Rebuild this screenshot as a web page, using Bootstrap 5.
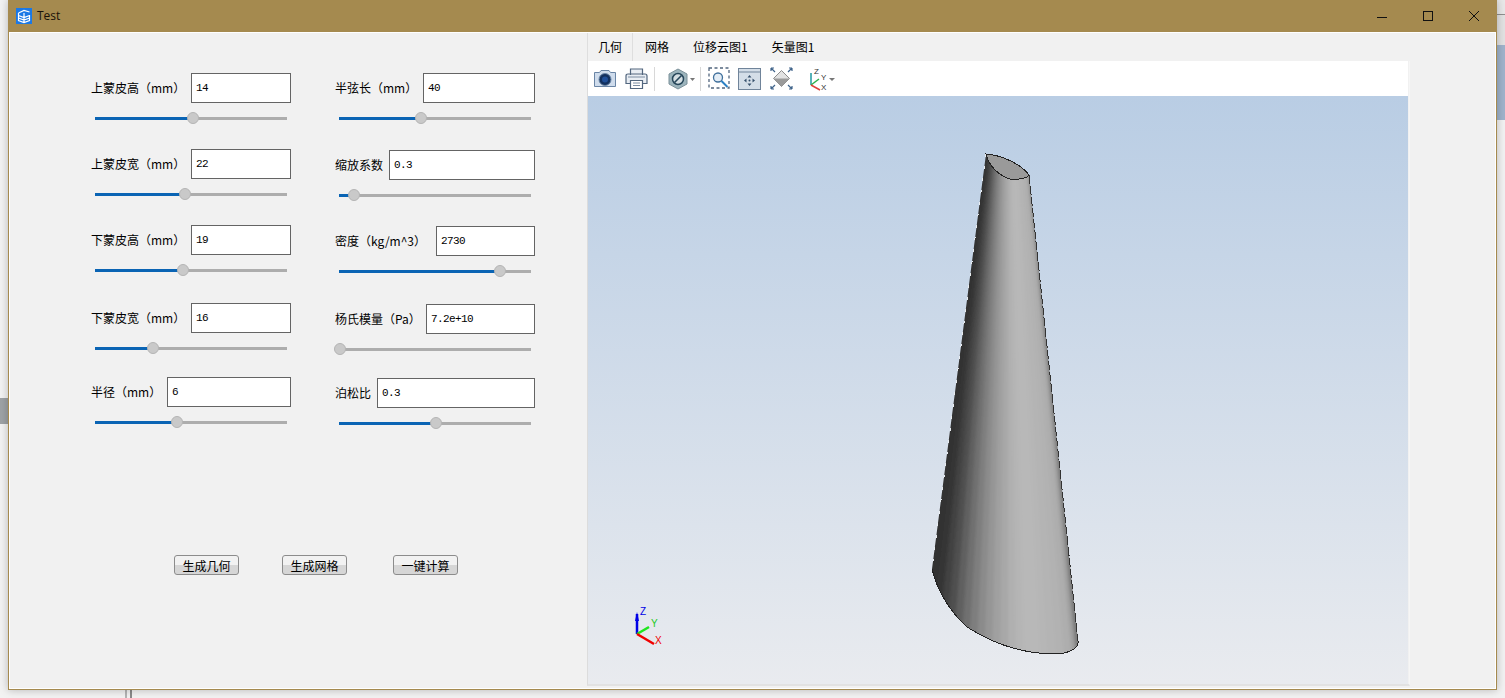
<!DOCTYPE html>
<html lang="zh">
<head>
<meta charset="utf-8">
<title>Test</title>
<link href="https://cdn.jsdelivr.net/npm/bootstrap@5.3.0/dist/css/bootstrap.min.css" rel="stylesheet">
<style>
html,body{height:100%;margin:0;background:#f2f2f2;overflow:hidden}
body{font-family:"Noto Sans CJK SC","Noto Sans",sans-serif;font-size:12px;color:#000}
.desk{height:698px;padding:0 8px 8px 8px;position:relative}
.bgband{position:absolute;left:0;top:398px;width:8px;height:26px;background:#9ea2a5}
.bgline{position:absolute;left:125px;top:690px;width:7px;height:8px;border-left:2px solid #b4b4b4;border-right:2px solid #8a8a8a}
.bgstrip1{position:absolute;left:1497px;top:0;width:8px;height:45px;background:#e2e2e2;border-top:14px solid #e8e8e8}
.bgrule{position:absolute;left:1497px;top:14px;width:8px;height:1px;background:#8f8f8f}
.bgstrip2{position:absolute;left:1497px;top:45px;width:8px;height:75px;background:#9fb3cb}
.win{height:690px;width:1489px;box-shadow:0 0 8px rgba(0,0,0,.25);background:#a58a4f;padding:0 1px 1px 1px;position:relative}
.tbar{height:32px;padding-left:7px;color:#1a1208;font-family:"Open Sans",sans-serif;font-size:12px}
.tico{width:16px;height:16px;margin-right:5px}
.wbtns{margin-right:-1px}
.wbtn{width:46px;height:30px}
.client{height:657px;background:#f1f1f1;border:1px solid #fff}
.pane{width:577px;padding:40px 0 0 81px}
.col1{width:200px;margin-right:44px}
.fld{height:56px}
.m20{margin-bottom:20px}.m21{margin-bottom:21px}.m22{margin-bottom:22px}.m18{margin-bottom:18px}
.lab{white-space:nowrap;line-height:30px}
.inp{height:30px;border:1px solid #646464;background:#fff;padding:0 0 0 4px;font-family:"Liberation Mono",monospace;font-size:11px;letter-spacing:-.6px;color:#000;border-radius:0;outline:0;min-width:0}
.iw100{width:100px}.iw124{width:124px}.iw112{width:112px}.iw146{width:146px}.iw99{width:99px}.iw109{width:109px}.iw158{width:158px}
.sld{height:3px;width:192px;margin:14px 0 0 4px;background:#adadad;position:relative}
.sfill{height:3px;background:#0a64b4}
.knob{position:absolute;top:-5px;width:12px;height:12px;margin-left:-6px;border-radius:50%;background:#c9c9c9;border:1px solid #b4b4b4}
.btnrow{margin-top:121px;padding-left:83px}
.qbtn{width:65px;height:20px;padding:0;border:1px solid #8c8c8c;border-radius:3px;background:linear-gradient(#f2f2f2 0,#f2f2f2 50%,#d6d6d6 50%,#d6d6d6 100%);font-size:12px;line-height:17px;color:#000;font-family:"Noto Sans CJK SC",sans-serif}
.gap1{margin-right:43px}.gap2{margin-right:46px}
.rside{width:823px}
.tabsb{height:28px}
.tb{padding:0 12px;line-height:27px;height:28px;white-space:nowrap}
.tb1{padding:0;border-left:1px solid #dedede;border-right:1px solid #dedede;width:46px;line-height:27px}
.view{border-left:1px solid #dcdcdc;border-right:1px solid #f6f6f6;border-bottom:2px solid #e2e2e2;width:823px;padding-right:1px}
.tools{height:35px;background:#fff;padding-left:5px}
.sep{width:1px;height:24px;background:#d8d8d8}
.canvas{height:588px;display:block;width:820px;background:linear-gradient(#b9cde4,#e9ebef)}
.axtx{font-family:"Liberation Sans",sans-serif;font-size:10px}
.axmini{font-family:"Liberation Sans",sans-serif;font-size:8px;fill:#333}
.i1{margin-right:8px}.i2{margin-right:6px}.i3{margin-right:13px}.i4{margin-right:4px}.i5{margin-right:7px}
.i6{margin-right:8px}.i7{margin-right:9px}.i8{margin-right:16px}
</style>
</head>
<body>
<div class="desk">
<div class="bgband"></div>
<div class="bgline"></div>
<div class="bgstrip1"></div>
<div class="bgrule"></div>
<div class="bgstrip2"></div>
<div class="win d-flex flex-column">
  <div class="tbar d-flex align-items-center">
    <svg class="tico" viewBox="0 0 16 16"><rect width="16" height="16" fill="#1a78e6"/><path d="M2.500 5 8 2.500 13.500 4M2.500 5v7.500L8 14.500l5.500-2V7M2.500 7.500 8 9.500l5.500-2M2.500 10 8 12l5.500-2M8 5v9" fill="none" stroke="#fff" stroke-width="1.200"/></svg>
    <span>Test</span>
    <div class="wbtns d-flex ms-auto">
      <div class="wbtn d-flex align-items-center justify-content-center"><svg width="12" height="12" viewBox="0 0 12 12"><path d="M1 7.500h10" stroke="#111" fill="none"/></svg></div>
      <div class="wbtn d-flex align-items-center justify-content-center"><svg width="12" height="12" viewBox="0 0 12 12"><rect x="1.500" y="1.500" width="9" height="9" stroke="#111" fill="none"/></svg></div>
      <div class="wbtn d-flex align-items-center justify-content-center"><svg width="12" height="12" viewBox="0 0 12 12"><path d="M1 1l10 10M11 1 1 11" stroke="#111" fill="none"/></svg></div>
    </div>
  </div>
  <div class="client d-flex">
    <div class="pane">
      <div class="d-flex">
        <div class="col1">
          <div class="fld m20"><div class="d-flex justify-content-between"><span class="lab">上蒙皮高（mm）</span><input class="inp iw100" value="14"></div><div class="sld"><div class="sfill" style="width:98px"></div><div class="knob" style="left:98px"></div></div></div>
          <div class="fld m20"><div class="d-flex justify-content-between"><span class="lab">上蒙皮宽（mm）</span><input class="inp iw100" value="22"></div><div class="sld"><div class="sfill" style="width:90px"></div><div class="knob" style="left:90px"></div></div></div>
          <div class="fld m22"><div class="d-flex justify-content-between"><span class="lab">下蒙皮高（mm）</span><input class="inp iw100" value="19"></div><div class="sld"><div class="sfill" style="width:88px"></div><div class="knob" style="left:88px"></div></div></div>
          <div class="fld m18"><div class="d-flex justify-content-between"><span class="lab">下蒙皮宽（mm）</span><input class="inp iw100" value="16"></div><div class="sld"><div class="sfill" style="width:58px"></div><div class="knob" style="left:58px"></div></div></div>
          <div class="fld"><div class="d-flex justify-content-between"><span class="lab">半径（mm）</span><input class="inp iw124" value="6"></div><div class="sld"><div class="sfill" style="width:82px"></div><div class="knob" style="left:82px"></div></div></div>
        </div>
        <div class="col1">
          <div class="fld m21"><div class="d-flex justify-content-between"><span class="lab">半弦长（mm）</span><input class="inp iw112" value="40"></div><div class="sld"><div class="sfill" style="width:82px"></div><div class="knob" style="left:82px"></div></div></div>
          <div class="fld m20"><div class="d-flex justify-content-between"><span class="lab">缩放系数</span><input class="inp iw146" value="0.3"></div><div class="sld"><div class="sfill" style="width:15px"></div><div class="knob" style="left:15px"></div></div></div>
          <div class="fld m22"><div class="d-flex justify-content-between"><span class="lab">密度（kg/m^3）</span><input class="inp iw99" value="2730"></div><div class="sld"><div class="sfill" style="width:161px"></div><div class="knob" style="left:161px"></div></div></div>
          <div class="fld m18"><div class="d-flex justify-content-between"><span class="lab">杨氏模量（Pa）</span><input class="inp iw109" value="7.2e+10"></div><div class="sld"><div class="sfill" style="width:1px"></div><div class="knob" style="left:1px"></div></div></div>
          <div class="fld"><div class="d-flex justify-content-between"><span class="lab">泊松比</span><input class="inp iw158" value="0.3"></div><div class="sld"><div class="sfill" style="width:97px"></div><div class="knob" style="left:97px"></div></div></div>
        </div>
      </div>
      <div class="btnrow d-flex">
        <button class="qbtn gap1" type="button">生成几何</button>
        <button class="qbtn gap2" type="button">生成网格</button>
        <button class="qbtn" type="button">一键计算</button>
      </div>
    </div>
    <div class="rside">
      <div class="tabsb d-flex">
        <div class="tb1 text-center">几何</div>
        <div class="tb">网格</div>
        <div class="tb">位移云图1</div>
        <div class="tb">矢量图1</div>
      </div>
      <div class="view">
        <div class="tools d-flex align-items-center">
          <svg class="i1" width="24" height="19" viewBox="0 0 24 19"><path d="M1.500 3.500h5l1.500-2h8l1.500 2h5v14h-21z" fill="#cfdcec" stroke="#6a85a5"/><circle cx="12" cy="10.500" r="6" fill="#12305e" stroke="#6a85a5"/><circle cx="12" cy="10.500" r="3" fill="#1f4f98"/></svg>
          <svg class="i2" width="23" height="21" viewBox="0 0 23 21"><path d="M5.500 7V1h12v6M5 15.500H1V8q0-2 2-2h17q2 0 2 2v7.500h-4" fill="#e8edf3" stroke="#52667e" stroke-width="1.200"/><path d="M5.500 12.500h12v8h-12z" fill="#fff" stroke="#52667e" stroke-width="1.200"/><path d="M8 15h7M8 17.500h7M3 9h17" stroke="#7c8da2"/></svg>
          <div class="sep i3"></div>
          <svg class="i4" width="28" height="22" viewBox="0 0 28 22"><path d="M10 1l9 5v10l-9 5-9-5V6z" fill="#9cb4bc" stroke="#7b9099"/><circle cx="10" cy="11" r="5.500" fill="#d5dfe3" stroke="#27475a" stroke-width="1.500"/><path d="M6.500 14.500l7-7" stroke="#27475a" stroke-width="1.600"/><path d="M22 10h5l-2.500 3z" fill="#777"/></svg>
          <div class="sep i5"></div>
          <svg class="i6" width="22" height="23" viewBox="0 0 22 23"><rect x="1" y="1" width="20" height="20" fill="none" stroke="#52667e" stroke-dasharray="3 2.500" stroke-width="1.300"/><circle cx="10" cy="10.500" r="4.500" fill="#e3edf6" stroke="#40709c" stroke-width="1.300"/><path d="M13.500 14l6 6" stroke="#2a80c4" stroke-width="2"/></svg>
          <svg class="i7" width="23" height="22" viewBox="0 0 23 22"><rect x=".5" y=".5" width="22" height="21" fill="#d4dee8" stroke="#70849a"/><path d="M1 4h21" stroke="#70849a"/><circle cx="11.500" cy="12.500" r="1" fill="#36506c"/><path d="M11.500 7l-2 2.500h4zM11.500 18l-2-2.500h4zM6 12.500l2.500-2v4zM17 12.500l-2.500-2v4z" fill="#36506c"/></svg>
          <svg class="i8" width="23" height="23" viewBox="0 0 23 23"><path d="M11.500 3.500l8 8-8 8-8-8z" fill="#e2e2e2" stroke="#8b8b8b"/><path d="M3.500 11.500h16l-8 8z" fill="#9a9a9a"/><path d="M1 1l4 4M1 1v3M1 1h3M22 1l-4 4M22 1v3M22 1h-3M1 22l4-4M1 22v-3M1 22h3M22 22l-4-4M22 22v-3M22 22h-3" stroke="#3f638a" stroke-width="1.200" fill="none"/></svg>
          <svg width="27" height="26" viewBox="0 0 27 26"><path d="M2 19V7" stroke="#1f9aa0" stroke-width="1.500"/><path d="M2 19l8-6" stroke="#2db04a" stroke-width="1.500"/><path d="M2 19l9 5" stroke="#e0403a" stroke-width="1.500"/><text x="5" y="8" class="axmini">Z</text><text x="12" y="14" class="axmini">Y</text><text x="12" y="24" class="axmini">X</text><path d="M20 12h6l-3 3z" fill="#777"/></svg>
        </div>
        <svg class="canvas" viewBox="588 96 820 588">
          <defs>
            <clipPath id="cone"><path d="M986 154L1029 175L1078 641C1079 648 1070 654 1052 654C1020 653 990 642 967 627C950 612 937 590 932 569Z"/></clipPath>
            <filter id="soft" x="-10%" y="-5%" width="120%" height="110%"><feGaussianBlur stdDeviation="1.500 0"/></filter>
          </defs>
          <g clip-path="url(#cone)">
          <g filter="url(#soft)">
            <polygon fill="#303030" points="965,150 1040,150 1090,660 900,660"/>
            <polygon fill="#363636" points="987.500,150 1040,150 1090,660 928.400,660"/>
            <polygon fill="#424242" points="989.600,150 1040,150 1090,660 936.400,660"/>
            <polygon fill="#505050" points="991.600,150 1040,150 1090,660 944.400,660"/>
            <polygon fill="#606060" points="993.700,150 1040,150 1090,660 952.300,660"/>
            <polygon fill="#707070" points="995.700,150 1040,150 1090,660 960.300,660"/>
            <polygon fill="#7e7e7e" points="997.700,150 1040,150 1090,660 968.300,660"/>
            <polygon fill="#8b8b8b" points="999.800,150 1040,150 1090,660 976.300,660"/>
            <polygon fill="#969696" points="1001.800,150 1040,150 1090,660 984.300,660"/>
            <polygon fill="#a0a0a0" points="1003.900,150 1040,150 1090,660 992.300,660"/>
            <polygon fill="#a8a8a8" points="1005.900,150 1040,150 1090,660 1000.300,660"/>
            <polygon fill="#b0b0b0" points="1007.900,150 1040,150 1090,660 1008.200,660"/>
            <polygon fill="#b5b5b5" points="1010,150 1040,150 1090,660 1016.200,660"/>
            <polygon fill="#b8b8b8" points="1012,150 1040,150 1090,660 1024.200,660"/>
            <polygon fill="#b6b6b6" points="1016.100,150 1040,150 1090,660 1040.200,660"/>
            <polygon fill="#b4b4b4" points="1018.100,150 1040,150 1090,660 1048.200,660"/>
            <polygon fill="#b2b2b2" points="1020.200,150 1040,150 1090,660 1056.200,660"/>
            <polygon fill="#aeaeae" points="1022.200,150 1040,150 1090,660 1064.200,660"/>
            <polygon fill="#a0a0a0" points="1025.200,150 1040,150 1090,660 1072.200,660"/>
            <polygon fill="#7a7a7a" points="1026.300,150 1060,150 1110,660 1076.500,660"/>
          </g>
          </g>
          <path d="M1078 641C1079 648 1070 654 1052 654C1020 653 990 642 967 627C950 612 937 590 932 569" fill="none" stroke="#222" shape-rendering="crispEdges"/>
          <path d="M1029 175L1078 641" fill="none" stroke="#333" stroke-dasharray="9 2" shape-rendering="crispEdges"/>
          <path d="M986 154L932 569" fill="none" stroke="#e8ecf0" stroke-dasharray="3 9" shape-rendering="crispEdges"/>
          <path d="M986 154C1000 155 1020 163 1029 175C1028 178 1018 180 1010 179C1000 176 989 167 986 154Z" fill="#9a9a9a" stroke="#222" shape-rendering="crispEdges"/>
          <path d="M637 634V614" stroke="#0000e6" stroke-width="2.500"/><path d="M637 612l-2 9h4z" fill="#0000e6"/>
          <path d="M637 634L649 627" stroke="#1ee61e" stroke-width="2.500"/>
          <path d="M637 634L654 644" stroke="#f00000" stroke-width="2.500"/>
          <text x="640" y="615" class="axtx" fill="#0000e6">Z</text>
          <text x="651" y="627" class="axtx" fill="#1ec81e">Y</text>
          <text x="655" y="644" class="axtx" fill="#f00000">X</text>
        </svg>
      </div>
    </div>
  </div>
</div>
</div>
</body>
</html>
